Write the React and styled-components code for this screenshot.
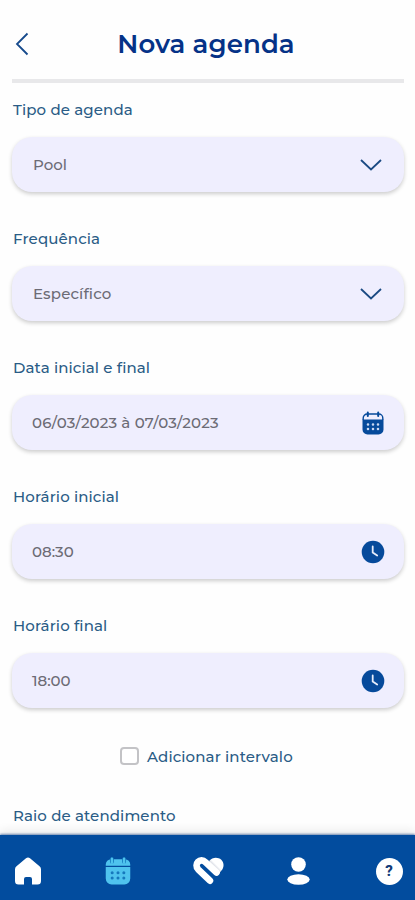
import React, { useState } from 'react';
import styled, { createGlobalStyle } from 'styled-components';

const GlobalStyle = createGlobalStyle`
  * {
    box-sizing: border-box;
  }

  body {
    margin: 0;
    background: #fefefe;
    font-family: Montserrat, Inter, sans-serif;
  }
`;

const Screen = styled.div`
  display: flex;
  flex-direction: column;
  width: 415px;
  height: 900px;
  overflow: hidden;
  background: #fefefe;
`;

const Header = styled.header`
  display: grid;
  grid-template-columns: 24px 1fr 28px;
  align-items: center;
  flex: none;
  height: 83px;
  margin: 0 11px 0 12px;
  padding-top: 8px;
  border-bottom: 4px solid #e8e8ea;
`;

const BackButton = styled.button`
  display: flex;
  padding: 0 0 0 3px;
  border: none;
  background: none;
  cursor: pointer;
`;

const Title = styled.h1`
  margin: 0;
  color: #053287;
  font-size: 26px;
  font-weight: 600;
  line-height: 32px;
  letter-spacing: 0.1px;
  text-align: center;
  white-space: nowrap;
`;

const Form = styled.main`
  flex: 1;
  min-height: 0;
  padding: 17px 11px 0 12px;
  overflow: hidden;
`;

const Field = styled.div`
  height: 129px;
`;

const Label = styled.label`
  display: block;
  padding-left: 1px;
  color: #2a5c86;
  font-size: 15px;
  font-weight: 500;
  line-height: 20px;
  letter-spacing: 0.12px;
  white-space: nowrap;
`;

const Control = styled.button`
  display: flex;
  align-items: center;
  justify-content: space-between;
  width: 100%;
  height: 55px;
  margin-top: 17px;
  padding: 0 19px 0 ${(p) => p.$inset}px;
  border: none;
  border-radius: 20px;
  background: #efeefe;
  box-shadow: 0 2px 4px rgba(0, 0, 0, 0.2);
  color: #6c6b75;
  font-family: inherit;
  font-size: 15px;
  font-weight: 500;
  cursor: pointer;
`;

const Value = styled.span`
  letter-spacing: ${(p) => p.$spacing || 0}px;
  white-space: nowrap;
`;

const IconSlot = styled.span`
  display: flex;
  align-items: center;
  justify-content: center;
  width: 24px;
  margin-right: ${(p) => (p.$wide ? 2 : 0)}px;
  color: #064a9b;
`;

const CheckRow = styled.label`
  display: flex;
  align-items: center;
  height: 20px;
  margin: 1px 0 40px 108px;
  color: #2a5c86;
  font-size: 15px;
  font-weight: 500;
  letter-spacing: 0.12px;
  white-space: nowrap;
  cursor: pointer;
`;

const Checkbox = styled.input`
  appearance: none;
  width: 19px;
  height: 18px;
  margin: 0 8px 0 0;
  border: 2px solid #c3c3c6;
  border-radius: 4px;
  background: #fff;

  &:checked {
    background: #064a9b;
  }
`;

const NavBar = styled.nav`
  display: flex;
  align-items: center;
  justify-content: space-between;
  flex: none;
  height: 65px;
  padding: 7px 9px 0 11px;
  background: #024c9e;
  box-shadow: 0 -1px 2px rgba(2, 50, 120, 0.55), 0 -5px 9px rgba(0, 0, 0, 0.07);
`;

const NavItem = styled.button`
  display: flex;
  align-items: center;
  justify-content: center;
  width: 34px;
  height: 34px;
  padding: 0;
  border: none;
  background: none;
  color: ${(p) => (p.$active ? '#4fc3ee' : '#fff')};
  cursor: pointer;
`;

const HelpBadge = styled.span`
  display: flex;
  align-items: center;
  justify-content: center;
  width: 27px;
  height: 27px;
  border-radius: 50%;
  background: #fff;
  color: #123c78;
  font-family: Roboto, sans-serif;
  font-size: 15px;
  font-weight: 800;
`;

const ChevronLeft = () => (
  <svg width="14" height="24" viewBox="0 0 14 24" fill="none" stroke="#164a8c" strokeWidth="1.8">
    <path d="M12.5 1.5L2 12l10.500 10.500" />
  </svg>
);

const ChevronDown = () => (
  <svg width="22" height="12" viewBox="0 0 22 12" fill="none" stroke="#1b4a83" strokeWidth="1.8">
    <path d="M1 1l10 9.500L21 1" />
  </svg>
);

const CalendarIcon = ({ size = 24, gap, outlined }) => (
  <svg width={size} height={size} viewBox="0 0 24 24">
    <path
      fill="currentColor"
      d="M1.500 8.500h21v10a5 5 0 0 1-5 5h-11a5 5 0 0 1-5-5z"
    />
    {outlined ? (
      <path
        fill="none"
        stroke="currentColor"
        strokeWidth="1.400"
        d="M2.200 9V7A4 4 0 0 1 6.200 3h11.600a4 4 0 0 1 4 4v2"
      />
    ) : (
      <path
        fill="currentColor"
        d="M1.500 7.600V6.500a4.500 4.500 0 0 1 4.500-4.500h12a4.500 4.500 0 0 1 4.500 4.500v1.100z"
      />
    )}
    {!outlined && (
      <path stroke={gap} strokeWidth="3.400" strokeLinecap="round" d="M6.800 2v2M17.200 2v2" />
    )}
    <path stroke="currentColor" strokeWidth="2" strokeLinecap="round" d="M6.800 1.500v3.500M17.200 1.500v3.500" />
    <path
      stroke={gap}
      strokeWidth="2.600"
      strokeLinecap="round"
      d="M7 13.500h.01M12 13.500h.01M17 13.500h.01M7 18h.01M12 18h.01M17 18h.01"
    />
  </svg>
);

const ClockIcon = () => (
  <svg width="24" height="24" viewBox="0 0 24 24" fill="none">
    <circle cx="12" cy="12" r="11.300" fill="currentColor" />
    <path d="M11.700 6.500v6l4.500 3" stroke="#e6edfb" strokeWidth="1.800" strokeLinecap="round" />
  </svg>
);

const HomeIcon = () => (
  <svg width="28" height="28" viewBox="0 0 28 28" fill="currentColor">
    <path d="M12 1.200a3.200 3.200 0 0 1 4 0l9.500 8A4 4 0 0 1 27 12.300V24a3.500 3.500 0 0 1-3.500 3.500H18V22a2 2 0 0 0-2-2h-4a2 2 0 0 0-2 2v5.500H4.500A3.500 3.500 0 0 1 1 24V12.300a4 4 0 0 1 1.500-3.100z" />
  </svg>
);

const HeartLogo = () => (
  <svg width="36" height="30" viewBox="0 0 36 30" fill="none">
    <defs>
      <linearGradient id="fold" x1="22" y1="12.500" x2="26" y2="8.500" gradientUnits="userSpaceOnUse">
        <stop offset="0" stopColor="#a9b0c2" />
        <stop offset="1" stopColor="#fff" />
      </linearGradient>
    </defs>
    <path
      d="M18.500 4C21.500.2 27.500-.1 31 3c3.200 3 3.200 8.300.2 11.500l-3.400 4.300L18 8z"
      fill="url(#fold)"
    />
    <path
      d="M19 25.200L6.500 13.200C1.500 8 8.500 0 14.500 5.800L26 16.600"
      stroke="#fff"
      strokeWidth="7"
      strokeLinecap="round"
    />
  </svg>
);

const UserIcon = () => (
  <svg width="24" height="28" viewBox="0 0 24 28" fill="currentColor">
    <circle cx="11.500" cy="7.500" r="7.300" />
    <ellipse cx="11.500" cy="22.500" rx="11.200" ry="5.200" />
  </svg>
);

const fields = [
  { label: 'Tipo de agenda', value: 'Pool', icon: 'select', inset: 21, spacing: 0 },
  { label: 'Frequência', value: 'Específico', icon: 'select', inset: 21, spacing: 0.15 },
  { label: 'Data inicial e final', value: '06/03/2023 à 07/03/2023', icon: 'date', inset: 20, spacing: 0.13 },
  { label: 'Horário inicial', value: '08:30', icon: 'time', inset: 20, spacing: 0 },
  { label: 'Horário final', value: '18:00', icon: 'time', inset: 20, spacing: 0 },
];

const FieldIcon = ({ type }) => {
  if (type === 'select') return <ChevronDown />;
  if (type === 'date') return <CalendarIcon gap="#c9d8f2" outlined />;
  return <ClockIcon />;
};

const App = () => {
  const [interval, setInterval] = useState(false);

  return (
    <>
      <GlobalStyle />
      <Screen>
        <Header>
          <BackButton aria-label="Voltar">
            <ChevronLeft />
          </BackButton>
          <Title>Nova agenda</Title>
        </Header>

        <Form>
          {fields.map((field) => (
            <Field key={field.label}>
              <Label>{field.label}</Label>
              <Control $inset={field.inset}>
                <Value $spacing={field.spacing}>{field.value}</Value>
                <IconSlot $wide={field.icon === 'select'}>
                  <FieldIcon type={field.icon} />
                </IconSlot>
              </Control>
            </Field>
          ))}

          <CheckRow>
            <Checkbox
              type="checkbox"
              checked={interval}
              onChange={(e) => setInterval(e.target.checked)}
            />
            Adicionar intervalo
          </CheckRow>

          <Label>Raio de atendimento</Label>
        </Form>

        <NavBar>
          <NavItem aria-label="Início">
            <HomeIcon />
          </NavItem>
          <NavItem aria-label="Agenda" $active>
            <CalendarIcon size={28} gap="#1679bd" />
          </NavItem>
          <NavItem aria-label="Saúde">
            <HeartLogo />
          </NavItem>
          <NavItem aria-label="Perfil">
            <UserIcon />
          </NavItem>
          <NavItem aria-label="Ajuda">
            <HelpBadge>?</HelpBadge>
          </NavItem>
        </NavBar>
      </Screen>
    </>
  );
};

export default App;
